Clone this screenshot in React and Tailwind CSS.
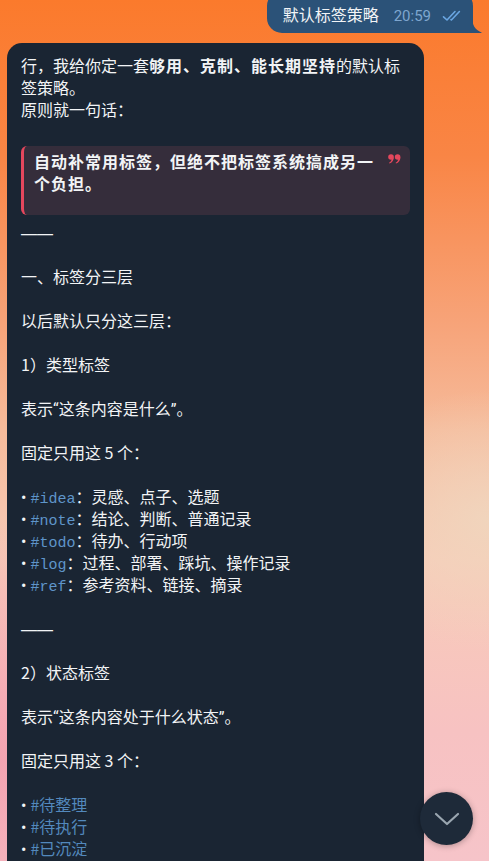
import React from 'react'

const CJK = '[font-family:"Noto_Sans_CJK_SC",sans-serif]'

function Code({ children }) {
  return (
    <span className='text-[15px] text-[#5f95ca] [font-family:"Liberation_Mono",monospace]'>{children}</span>
  )
}

function Tag({ children }) {
  return <span className="text-[#5389bd]">{children}</span>
}

function Line({ children }) {
  return <div className="h-[22px] whitespace-nowrap">{children}</div>
}

function Blank() {
  return <div className="h-[22px]" />
}

// narrow latin glyphs (bullets, curly quotes)
function L({ children }) {
  return <span className='[font-family:"Roboto",sans-serif]'>{children}</span>
}

function Bullet() {
  return <L>•&nbsp;</L>
}

function Dash() {
  return (
    <Line>
      <span className='[font-family:"Liberation_Sans",sans-serif]'>——</span>
    </Line>
  )
}

function QuoteMark() {
  return (
    <svg width="13" height="10" viewBox="0 0 13 10" className="absolute right-[9px] top-[8px]">
      <g fill="#e5475d">
        <circle cx="3" cy="3" r="2.8" />
        <path d="M5.8 3.2 C5.8 6.6 4 8.6 1.4 9.6 L1 8.7 C2.8 7.7 3.7 6.4 3.6 5 Z" />
        <circle cx="9.6" cy="3" r="2.8" />
        <path d="M12.4 3.2 C12.4 6.6 10.6 8.6 8 9.6 L7.6 8.7 C9.4 7.7 10.3 6.4 10.2 5 Z" />
      </g>
    </svg>
  )
}

function DoubleCheck() {
  return (
    <svg width="22" height="12" viewBox="0 0 22 12" fill="none" stroke="#6aa6e2" strokeWidth="1.6" strokeLinecap="round" strokeLinejoin="round">
      <path d="M1.5 6.8 L5 10 L13 1.5" />
      <path d="M9 9.6 L9.4 10 L17.4 1.5" />
    </svg>
  )
}

export default function App() {
  return (
    <div
      className={`relative h-[861px] w-full overflow-hidden text-[16px] text-[#f2f4f6] ${CJK} bg-[radial-gradient(ellipse_90px_70px_at_105px_505px,rgba(246,224,196,0.9),transparent),radial-gradient(ellipse_160px_130px_at_100%_520px,rgba(240,214,190,0.9),transparent),radial-gradient(ellipse_200px_240px_at_0%_760px,rgba(244,160,175,0.9),transparent),linear-gradient(180deg,#fb7a2c_0%,#f98545_18%,#f7a47a_38%,#f6bb9b_50%,#f8cbb8_65%,#f7c2c2_85%,#f6c4c9_100%)]`}
    >
      {/* outgoing */}
      <div className="flex justify-end pr-[16px]">
        <div className="relative mt-[-9px] flex h-[42px] items-end rounded-[15px] rounded-br-none bg-[#2b5278] pb-[8px] pl-[16px] pr-[9px]">
          <span className="leading-[22px]">默认标签策略</span>
          <span className='ml-[15px] flex items-center gap-[11px] text-[15px] leading-[18px] text-[#7ea6cf] [font-family:"Roboto",sans-serif]'>
            20:59
            <DoubleCheck />
          </span>
          <svg width="10" height="17" viewBox="0 0 10 17" className="absolute bottom-0 right-[-9px]">
            <path d="M0 0 C0 9 3 14 9.5 16.4 C9.8 16.5 9.8 17 9.4 17 L0 17 Z" fill="#2b5278" />
          </svg>
        </div>
      </div>

      {/* incoming */}
      <div className="ml-[7px] mt-[10px] w-[417px] rounded-[15px] bg-[#1a2533] px-[14px] pt-[11px] pb-[20px] leading-[22px]">
        <Line>
          行，我给你定一套<b className="font-bold tracking-[1px]">够用、克制、能长期坚持</b>的默认标
        </Line>
        <Line>签策略。</Line>
        <Line>原则就一句话：</Line>

        <div className="relative mt-[26px] rounded-[6px] border-l-[3px] border-[#e5475d] bg-[#352d3b] pt-[4px] pb-[21px] pl-[10px] font-bold tracking-[1px]">
          <Line>自动补常用标签，但绝不把标签系统搞成另一</Line>
          <Line>个负担。</Line>
          <QuoteMark />
        </div>

        <div className="mt-[6px]">
          <Dash />
          <Blank />
          <Line>一、标签分三层</Line>
          <Blank />
          <Line>以后默认只分这三层：</Line>
          <Blank />
          <Line>1）类型标签</Line>
          <Blank />
          <Line>表示<L>“</L>这条内容是什么<L>”</L>。</Line>
          <Blank />
          <Line>固定只用这 5 个：</Line>
          <Blank />
          <Line><Bullet /><Code>#idea</Code>：灵感、点子、选题</Line>
          <Line><Bullet /><Code>#note</Code>：结论、判断、普通记录</Line>
          <Line><Bullet /><Code>#todo</Code>：待办、行动项</Line>
          <Line><Bullet /><Code>#log</Code>：过程、部署、踩坑、操作记录</Line>
          <Line><Bullet /><Code>#ref</Code>：参考资料、链接、摘录</Line>
          <Blank />
          <Dash />
          <Blank />
          <Line>2）状态标签</Line>
          <Blank />
          <Line>表示<L>“</L>这条内容处于什么状态<L>”</L>。</Line>
          <Blank />
          <Line>固定只用这 3 个：</Line>
          <Blank />
          <Line><Bullet /><Tag>#待整理</Tag></Line>
          <Line><Bullet /><Tag>#待执行</Tag></Line>
          <Line><Bullet /><Tag>#已沉淀</Tag></Line>
          <Blank />
        </div>
      </div>

      {/* scroll down button */}
      <button className="absolute left-[420px] top-[792px] flex h-[53px] w-[53px] items-center justify-center rounded-full bg-[#1e2a39] shadow-[0_1px_6px_rgba(0,0,0,0.3)]">
        <svg width="26" height="16" viewBox="0 0 26 16" fill="none" stroke="#9aa6b0" strokeWidth="2.2" strokeLinecap="round" strokeLinejoin="round">
          <path d="M2 3 L13 13 L24 3" />
        </svg>
      </button>
    </div>
  )
}
